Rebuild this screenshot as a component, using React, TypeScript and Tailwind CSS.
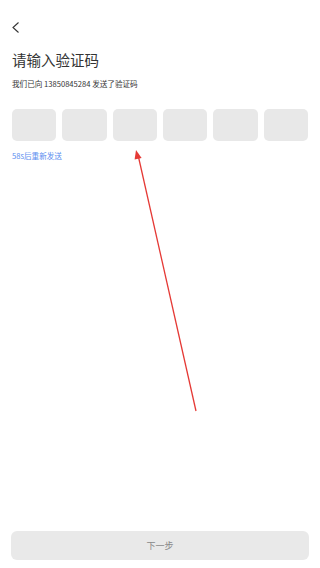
const CODE_LENGTH = 6;

const App = () => {
  return (
    <div
      className="relative flex h-[568px] w-full flex-col bg-white"
      style={{ fontFamily: '"Noto Sans CJK SC", "Noto Sans", sans-serif' }}
    >
      {/* Back */}
      <div className="px-3 pt-[22px]">
        <svg width="8" height="11" viewBox="0 0 8 11" fill="none">
          <polyline points="6.5,0.5 1,5.5 6.5,10.5" stroke="#333" strokeWidth="1.1" />
        </svg>
      </div>

      {/* Heading */}
      <div className="mt-[17px] px-3">
        <h1 className="text-[14.5px] leading-[20px] text-[#333]">请输入验证码</h1>
        <p className="mt-2 text-[7.6px] leading-[12px] text-[#333]">我们已向 13850845284 发送了验证码</p>
      </div>

      {/* Code boxes */}
      <div className="mt-[19px] flex gap-[6px] px-3">
        {Array.from({ length: CODE_LENGTH }).map((_, i) => (
          <div key={i} className="h-8 flex-1 rounded-[5px] bg-[#e8e8e8]" />
        ))}
      </div>
      <p className="mt-[9px] px-3 text-[7.6px] leading-[12px] text-[#5b8def]">58s后重新发送</p>

      <div className="flex-1" />

      {/* Next */}
      <button className="mx-[11px] mb-[8px] h-[29px] rounded-[6px] bg-[#e9e9e9] text-[9px] text-[#888]">
        下一步
      </button>

      {/* Annotation arrow */}
      <svg className="pointer-events-none absolute inset-0" width="320" height="568">
        <line x1="196" y1="411" x2="138.5" y2="157" stroke="#e53935" strokeWidth="1.3" />
        <polygon points="136,150 141.6,158 134.6,159.6" fill="#e53935" />
      </svg>
    </div>
  );
};

export default App;
